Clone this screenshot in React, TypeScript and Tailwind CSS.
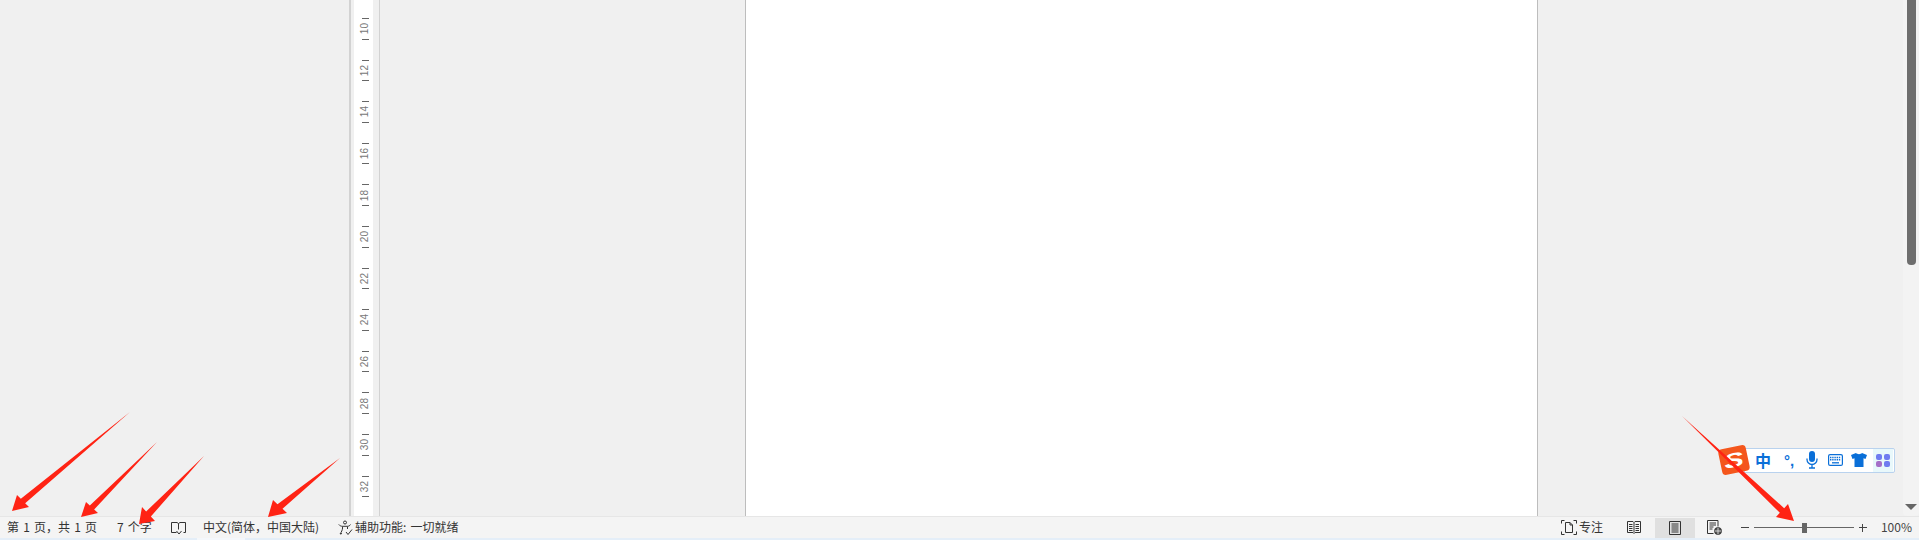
const rulerLabels = [10, 12, 14, 16, 18, 20, 22, 24, 26, 28, 30, 32];

const arrows = [
  { tail: [130, 412], tip: [12, 511], a: [17, 495], b: [29, 507] },
  { tail: [157, 442], tip: [81, 517], a: [86, 502], b: [98, 513] },
  { tail: [204, 456], tip: [139, 524], a: [142, 507], b: [155, 521] },
  { tail: [340, 458], tip: [268, 517], a: [273, 500], b: [287, 513] },
  { tail: [1682, 416], tip: [1794, 521], a: [1788, 504], b: [1776, 517] },
];

function arrowPoints(x: { tail: number[]; tip: number[]; a: number[]; b: number[] }) {
  const innerA = [x.a[0] + (x.b[0] - x.a[0]) * 0.32, x.a[1] + (x.b[1] - x.a[1]) * 0.32];
  const innerB = [x.b[0] + (x.a[0] - x.b[0]) * 0.32, x.b[1] + (x.a[1] - x.b[1]) * 0.32];
  return [x.tail, innerA, x.a, x.tip, x.b, innerB].map((p) => p.join(",")).join(" ");
}

function RulerCell({ label }: { label: number }) {
  return (
    <div className="flex h-[41.6px] shrink-0 flex-col items-center justify-between py-[10px] pl-[3px]">
      <div className="h-px w-[7px] shrink-0 bg-[#666]" />
      <span className="rotate-180 text-[10px] leading-none text-[#777] [font-family:'Liberation_Sans',sans-serif] [writing-mode:vertical-rl]">{label}</span>
      <div className="h-px w-[7px] shrink-0 bg-[#666]" />
    </div>
  );
}

function BookIcon() {
  return (
    <svg width="15" height="14" viewBox="0 0 15 14" fill="none" stroke="#333" strokeWidth="1">
      <path d="M5.500 11.500H.5v-10h5.500l1.500 1 1.500-1h5.500v10h-2M7.500 2.500v6" />
      <path d="M5.500 10l2.500 3 2.500-3" />
    </svg>
  );
}

function AccessIcon() {
  return (
    <svg width="16" height="16" viewBox="0 0 16 16" fill="none" stroke="#333" strokeWidth="1">
      <circle cx="7" cy="2.500" r="1.500" />
      <path d="M.8 4.500c1 1.300 2.500 1.800 3.700 1.800h5c1 0 2.300-.5 3-1.800M4.500 6.500c.3 2-.3 4-1.500 6l-1 1.500 2-.5M9.500 6.500V9" />
      <path d="M8 12l2 2.500 4-5" />
    </svg>
  );
}

function FocusIcon() {
  return (
    <svg width="16" height="15" viewBox="0 0 16 15" fill="none" stroke="#333" strokeWidth="1">
      <path d="M.5 3.500v-3h3M12.500.5h3v3M15.500 11.500v3h-3M3.500 14.500h-3v-3" />
      <path d="M4.500 12.500v-10h4.500l2.500 2.500v7.500zM9 2.500V5h2.500" />
    </svg>
  );
}

function ReadIcon() {
  return (
    <svg width="14" height="13" viewBox="0 0 14 13" fill="none" stroke="#333" strokeWidth="1">
      <path d="M.5.5h5.500l1 1 1-1h5.500v11h-5.500l-1 1-1-1H.5zM7 1.500v10" />
      <path d="M2 3.500h3.500M2 5.500h3.500M2 7.500h3.500M2 9.500h3.500M8.500 3.500H12M8.500 5.500H12M8.500 7.500H12M8.500 9.500H12" />
    </svg>
  );
}

function PrintIcon() {
  return (
    <svg width="12" height="14" viewBox="0 0 12 14" fill="none" stroke="#333" strokeWidth="1">
      <path d="M.5.5h11v13H.5zM2.500 3h7M2.500 5h7M2.500 7h7M2.500 9h7M2.500 11h7" />
    </svg>
  );
}

function WebIcon() {
  return (
    <svg width="15" height="15" viewBox="0 0 15 15" fill="none" stroke="#333" strokeWidth="1">
      <path d="M6.500 13.500H.5V.5h10.500v6M2.500 3h6.500M2.500 5h6.500M2.500 7h4M2.500 9h3" />
      <circle cx="11" cy="11" r="3.500" fill="#555" />
      <path d="M7.500 11h7M11 7.500v7" stroke="#eee" strokeWidth=".8" />
    </svg>
  );
}

function ImeBar() {
  return (
    <div className="absolute left-[1720px] top-[447px] flex items-center">
      <div className="z-10 flex h-[26px] w-[28px] -rotate-12 items-center justify-center overflow-hidden rounded-[4px] bg-[#f4561c]">
        <span className="scale-x-150 text-[20px] font-bold italic leading-none text-white [font-family:'Liberation_Sans',sans-serif]">S</span>
      </div>
      <div className="-ml-[4px] flex h-[25px] w-[151px] items-center rounded-r-[2px] border border-[#b9d2ee] bg-white pl-[10px]">
        <span className="w-[27px] text-[16px] font-bold leading-none text-[#0a6fd8]">中</span>
        <span className="w-[24px] pl-[2px] text-[15px] font-bold leading-none text-[#0a6fd8] [font-family:'Liberation_Sans',sans-serif]">°,</span>
        <svg className="mr-[10px]" width="12" height="18" viewBox="0 0 12 18" fill="#0a6fd8">
          <rect x="3" y="0" width="6" height="11" rx="3" />
          <path d="M1 7.500v1a5 5 0 0 0 10 0v-1M6 13.500V17M3 17h6" fill="none" stroke="#0a6fd8" strokeWidth="1.300" />
        </svg>
        <svg className="mr-[8px]" width="15" height="12" viewBox="0 0 15 12">
          <rect x=".6" y=".6" width="13.800" height="10.800" rx="1.500" fill="none" stroke="#0a6fd8" strokeWidth="1.200" />
          <path d="M2 3.500h11M2 5.800h11" stroke="#0a6fd8" strokeWidth="1.500" strokeDasharray="1.400 .8" />
          <path d="M4 8.800h7" stroke="#0a6fd8" strokeWidth="1.300" />
        </svg>
        <svg className="mr-[6px]" width="16" height="14" viewBox="0 0 16 14" fill="#0a6fd8">
          <path d="M5 0c1 1.500 5 1.500 6 0l5 2-1.500 4-2-.7V14H3.500V5.300l-2 .7L0 2z" />
        </svg>
        <div className="grid h-[23px] w-[20px] shrink-0 grid-cols-2 content-center justify-center gap-[1px] bg-[#e8f8fb] px-[3px]">
          <div className="h-[6px] w-[6px] rounded-[2px] bg-[#6f7cf0]" />
          <div className="h-[6px] w-[6px] rounded-[2px] bg-[#6f7cf0]" />
          <div className="h-[6px] w-[6px] rounded-[2px] bg-[#a56fc8]" />
          <div className="h-[6px] w-[6px] rounded-[2px] bg-[#6f7cf0]" />
        </div>
      </div>
    </div>
  );
}

export default function App() {
  return (
    <div className="relative flex h-[540px] w-[1919px] flex-col overflow-hidden bg-[#f0f0f0] text-[12px] text-[#333] [font-family:'Noto_Sans_CJK_SC','Noto_Sans',sans-serif]">
      <div className="flex min-h-0 flex-1">
        <div className="w-[349px] shrink-0" />
        <div className="w-[2px] shrink-0 bg-[#d2d2d2]" />
        <div className="w-[3px] shrink-0" />
        <div className="flex w-[19px] shrink-0 flex-col overflow-hidden bg-white pt-[8px]">
          {rulerLabels.map((n) => (
            <RulerCell key={n} label={n} />
          ))}
        </div>
        <div className="box-content w-[6px] shrink-0 border-r border-[#d2d2d2]" />
        <div className="w-[365px] shrink-0" />
        <div className="w-[793px] shrink-0 border-x border-[#bdbdbd] bg-white" />
        <div className="flex-1" />
        <div className="flex w-[16px] shrink-0 flex-col items-center justify-between rounded-b-[4px] bg-[#f3f3f3] pb-[6px]">
          <div className="ml-[1px] h-[265px] w-[9px] rounded-b-[4px] bg-[#6e6e6e]" />
          <div className="h-0 w-0 border-x-[6px] border-t-[6px] border-x-transparent border-t-[#666]" />
        </div>
      </div>

      <div className="flex h-[22px] shrink-0 items-center border-t border-[#e6e6e6] bg-[#f4f4f4] pl-[7px] [word-spacing:1.5px]">
        <span className="w-[110px] whitespace-pre pb-[2px]">第 1 页，共 1 页</span>
        <span className="w-[54px] whitespace-pre pb-[2px]">7 个字</span>
        <div className="w-[32px]">
          <BookIcon />
        </div>
        <span className="w-[135px] whitespace-pre pb-[2px]">中文(简体，中国大陆)</span>
        <div className="mr-[1px] w-[16px]">
          <AccessIcon />
        </div>
        <span className="whitespace-pre pb-[2px]">辅助功能: 一切就绪</span>
        <div className="flex-1" />
        <FocusIcon />
        <span className="ml-[2px] mr-[24px] pb-[2px]">专注</span>
        <ReadIcon />
        <div className="ml-[14px] flex h-[20px] w-[40px] items-center justify-center bg-[#e0e0e0]">
          <PrintIcon />
        </div>
        <div className="ml-[12px] mr-[19px]">
          <WebIcon />
        </div>
        <div className="h-px w-[8px] bg-[#444]" />
        <div className="relative mx-[5px] flex h-[14px] w-[100px] items-center">
          <div className="h-px w-full bg-[#666]" />
          <div className="absolute left-[48px] top-[2px] h-[10px] w-[5px] bg-[#666]" />
        </div>
        <div className="relative h-[8px] w-[8px]">
          <div className="absolute left-0 top-[3.5px] h-px w-[8px] bg-[#444]" />
          <div className="absolute left-[3.5px] top-0 h-[8px] w-px bg-[#444]" />
        </div>
        <span className="ml-[14px] mr-[7px] pb-[2px] text-[#444]">100%</span>
      </div>

      <div className="flex h-[2px] shrink-0 bg-[#e4eef8]">
        <div className="w-[197px]" />
        <div className="w-[48px] bg-[#f4f7fb]" />
      </div>

      <ImeBar />

      <svg className="absolute left-0 top-0 z-20" width="1919" height="540" fill="#ff2314">
        {arrows.map((x) => (
          <polygon key={x.tip.join()} points={arrowPoints(x)} />
        ))}
      </svg>
    </div>
  );
}
